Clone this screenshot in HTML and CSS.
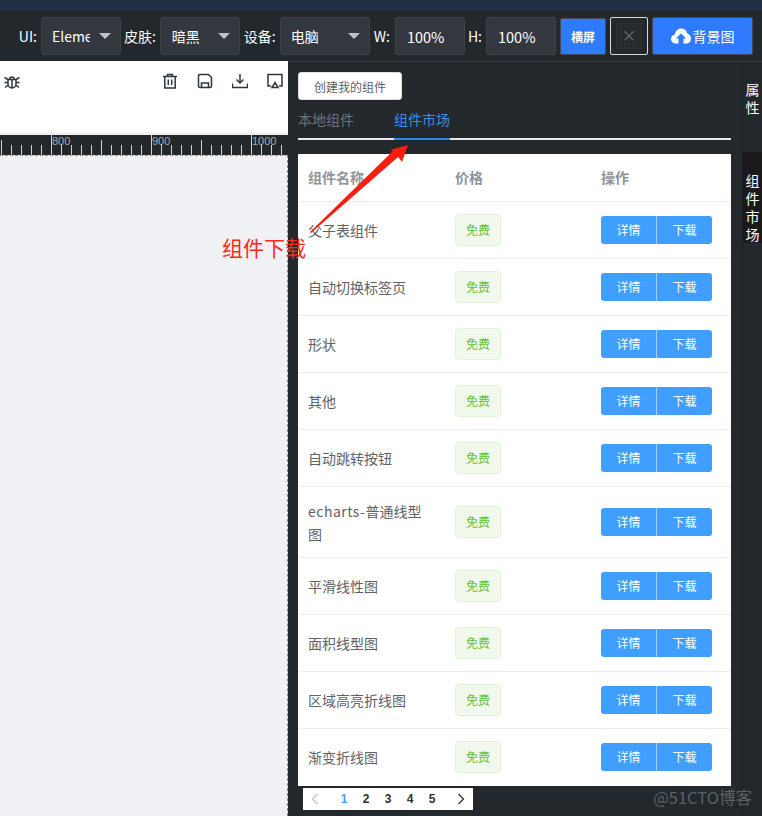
FILE: index.html
```html
<!DOCTYPE html>
<html lang="zh">
<head>
  <meta charset="UTF-8" />
  <meta name="viewport" content="width=device-width, initial-scale=1" />
  <title>组件市场</title>
  <link rel="stylesheet" href="styles.css">
</head>
<body>

  <div class="top-strip"></div>

  <header class="toolbar">
    <label class="field-label">UI:</label>
    <div class="select select-ui"><span class="select-text">Element</span><i class="caret"></i></div>
    <label class="field-label">皮肤:</label>
    <div class="select select-skin"><span class="select-text">暗黑</span><i class="caret"></i></div>
    <label class="field-label label-device">设备:</label>
    <div class="select select-device"><span class="select-text">电脑</span><i class="caret"></i></div>
    <label class="field-label label-w">W:</label>
    <div class="size-input">100%</div>
    <label class="field-label">H:</label>
    <div class="size-input">100%</div>
    <button class="btn-landscape">横屏</button>
    <button class="btn-rotate"><span>×</span></button>
    <button class="btn-bg">
      <svg width="20" height="16" viewBox="0 0 20 16"><path fill="#fff" d="M5 15.500C2.200 15.500 0 13.500 0 11c0-2.200 1.600-4 3.800-4.400C4.400 3 7 .5 10.200.5c3 0 5.500 2 6.100 4.900C18.500 6.100 20 8.200 20 10.700c0 2.700-2.200 4.800-4.900 4.800h-2.600v-5h2.700L10 5.400 4.800 10.500h2.700v5z"/></svg>
      背景图
    </button>
  </header>

  <main class="workspace">
    <section class="canvas-side">
      <div class="canvas-tools">
        <svg class="tool tool-bug" viewBox="0 0 16 16"><path d="M4 6.500h8v4.500a4 4 0 0 1-8 0zM5.500 6.500a2.500 2.500 0 0 1 5 0M8 7v7.500M.5 4.500l3.500 2M15.500 4.500l-3.500 2M.5 9.500H4M15.500 9.500H12M1 14.500l3.500-2.500M15 14.500 11.500 12"/></svg>
        <span class="tools-gap"></span>
        <svg class="tool" viewBox="0 0 16 16"><path d="M1 3.500h14M5.500 3.500V1.500h5v2M2.800 3.500v11.500h10.400V3.500M6.300 6.500v5.500M9.700 6.500v5.500"/></svg>
        <svg class="tool" viewBox="0 0 16 16"><path d="M2.500 1.500h9l3 3v8.500a1.500 1.500 0 0 1-1.500 1.500H3A1.500 1.500 0 0 1 1.500 13V2.500a1 1 0 0 1 1-1zM4.500 14.500V10h7v4.500"/></svg>
        <svg class="tool" viewBox="0 0 16 16"><path d="M8 1v8.500M4.500 6.500 8 10l3.500-3.500M.5 10.500v4h15v-4" /></svg>
        <svg class="tool" viewBox="0 0 16 16"><path d="M4 13H1V1.500h14V13h-3"/><path d="M8 9.500l3 5H5z"/></svg>
      </div>
      <div class="ruler">
        <span class="ruler-num num-800">800</span>
        <span class="ruler-num num-900">900</span>
        <span class="ruler-num num-1000">1000</span>
      </div>
      <div class="canvas-area"></div>
    </section>

    <section class="panel">
      <button class="btn-create">创建我的组件</button>
      <div class="tabs">
        <a class="tab">本地组件</a>
        <a class="tab active">组件市场</a>
      </div>
      <table class="market">
        <thead>
          <tr><th>组件名称</th><th>价格</th><th>操作</th></tr>
        </thead>
        <tbody>
          <tr><td>父子表组件</td><td><span class="tag">免费</span></td><td><div class="btn-group"><button>详情</button><button>下载</button></div></td></tr>
          <tr><td>自动切换标签页</td><td><span class="tag">免费</span></td><td><div class="btn-group"><button>详情</button><button>下载</button></div></td></tr>
          <tr><td>形状</td><td><span class="tag">免费</span></td><td><div class="btn-group"><button>详情</button><button>下载</button></div></td></tr>
          <tr><td>其他</td><td><span class="tag">免费</span></td><td><div class="btn-group"><button>详情</button><button>下载</button></div></td></tr>
          <tr><td>自动跳转按钮</td><td><span class="tag">免费</span></td><td><div class="btn-group"><button>详情</button><button>下载</button></div></td></tr>
          <tr><td><span class="latin">echarts-</span>普通线型图</td><td><span class="tag">免费</span></td><td><div class="btn-group"><button>详情</button><button>下载</button></div></td></tr>
          <tr><td>平滑线性图</td><td><span class="tag">免费</span></td><td><div class="btn-group"><button>详情</button><button>下载</button></div></td></tr>
          <tr><td>面积线型图</td><td><span class="tag">免费</span></td><td><div class="btn-group"><button>详情</button><button>下载</button></div></td></tr>
          <tr><td>区域高亮折线图</td><td><span class="tag">免费</span></td><td><div class="btn-group"><button>详情</button><button>下载</button></div></td></tr>
          <tr><td>渐变折线图</td><td><span class="tag">免费</span></td><td><div class="btn-group"><button>详情</button><button>下载</button></div></td></tr>
        </tbody>
      </table>
      <div class="pager">
        <svg class="pager-arrow" width="8" height="12" viewBox="0 0 8 12"><path d="M6.500 1 1.500 6l5 5" stroke="#c0c4cc"/></svg>
        <ul class="pager-nums">
          <li class="current">1</li><li>2</li><li>3</li><li>4</li><li>5</li>
        </ul>
        <svg class="pager-arrow" width="8" height="12" viewBox="0 0 8 12"><path d="M1.500 1l5 5-5 5" stroke="#303133"/></svg>
      </div>
    </section>

    <nav class="rail">
      <a class="rail-item rail-props">属性</a>
      <a class="rail-item rail-market">组件市场</a>
    </nav>
  </main>

  <!-- 截图上的标注 -->
  <svg class="note-arrow" width="110" height="100" viewBox="0 0 110 100"><path fill="#fb1e10" d="M2 90 85 9 82 8 100 3 94 20 90 15 3 91z"/></svg>
  <div class="note-text">组件下载</div>
  <div class="watermark">@51CTO博客</div>

</body>
</html>
```

FILE: styles.css
```css
* {
  box-sizing: border-box;
}
body {
  margin: 0;
  height: 816px;
  overflow: hidden;
  position: relative;
  display: flex;
  flex-direction: column;
  font-family: "Noto Sans CJK SC", "Liberation Sans", sans-serif;
  font-size: 14px;
  background: #23282d;
}
button {
  font-family: inherit;
  cursor: pointer;
}

.top-strip {
  height: 11px;
  background: #232f45;
}

/* 顶部工具栏 */
.toolbar {
  height: 50px;
  flex: none;
  background: #23282d;
  display: flex;
  align-items: center;
  justify-content: flex-end;
  padding: 0 9px 0 0;
  color: #fff;
}
.field-label {
  font-size: 14px;
  white-space: nowrap;
  margin-right: 4px;
  margin-left: 3px;
}
.label-device {
  margin-left: 4px;
}
.label-w {
  margin-left: 4px;
  margin-right: 5px;
}
.select {
  height: 38px;
  background: #33383f;
  border: 1px solid #3e434a;
  border-radius: 3px;
  display: flex;
  align-items: center;
  justify-content: space-between;
  padding: 0 9px 0 10px;
  font-size: 14px;
}
.select-ui { width: 80px; }
.select-skin { width: 80px; padding-left: 11px; }
.select-device { width: 90px; }
.select-text {
  overflow: hidden;
  white-space: nowrap;
  width: 38px;
}
.caret {
  width: 0;
  height: 0;
  border-left: 6px solid transparent;
  border-right: 6px solid transparent;
  border-top: 6px solid #bfc2c6;
}
.size-input {
  width: 70px;
  height: 38px;
  background: #33383f;
  border: 1px solid #3e434a;
  border-radius: 3px;
  display: flex;
  align-items: center;
  padding-left: 11px;
  font-size: 14.500px;
}
.btn-landscape {
  width: 46px;
  height: 37px;
  margin-left: 4px;
  background: #2f7bff;
  border: 1px solid #3f4a5a;
  border-radius: 2px;
  color: #fff;
  font-size: 12px;
  font-weight: 700;
  padding: 0;
}
.btn-rotate {
  width: 38px;
  height: 38px;
  margin-left: 4px;
  padding: 0;
  background: #23282d;
  border: 1px solid #d8d8d8;
  border-radius: 2px;
  display: flex;
  align-items: center;
  justify-content: center;
}
.btn-rotate span {
  width: 26px;
  height: 26px;
  background: #272b30;
  border: 1px solid #2c3035;
  color: #70757b;
  font-size: 15px;
  line-height: 22px;
}
.btn-bg {
  width: 101px;
  height: 38px;
  margin-left: 4px;
  background: #2f7bff;
  border: 1px solid #3f4a5a;
  border-radius: 2px;
  color: #fff;
  font-size: 14px;
  display: flex;
  align-items: center;
  justify-content: center;
  gap: 2px;
  padding: 0;
}

.workspace {
  flex: 1;
  display: flex;
  min-height: 0;
}

/* 左边画布 */
.canvas-side {
  width: 288px;
  flex: none;
  display: flex;
  flex-direction: column;
  background: #f0f1f5;
}
.canvas-tools {
  height: 71px;
  flex: none;
  background: #fff;
  display: flex;
  align-items: flex-start;
  padding: 12px 5px 0 4px;
  gap: 19px;
}
.tools-gap {
  flex: 1;
}
.tool {
  width: 16px;
  height: 16px;
  flex: none;
  fill: none;
  stroke: #2d3640;
  stroke-width: 1.500;
}
.ruler {
  height: 20px;
  flex: none;
  margin-top: 3px;
  position: relative;
  background-color: #23282d;
  background-image:
    linear-gradient(90deg, #d0d2d4 1px, transparent 1px),
    linear-gradient(90deg, #d0d2d4 1px, transparent 1px),
    linear-gradient(90deg, #d0d2d4 1px, transparent 1px);
  background-size: 100px 20px, 100px 15px, 10px 10px;
  background-position: 51px 0, 1px 5px, 1px 10px;
  background-repeat: repeat-x;
}
.ruler-num {
  position: absolute;
  top: 0;
  font-size: 11px;
  line-height: 13px;
  color: #a9abad;
  font-family: "Liberation Sans", sans-serif;
}
.num-800 { left: 52px; }
.num-900 { left: 152px; }
.num-1000 { left: 252px; }
.canvas-area {
  flex: 1;
  border-top: 1px dashed #a99a9a;
  border-right: 1px dashed #8f8588;
}

/* 右边面板 */
.panel {
  width: 454px;
  flex: none;
  background: #23282d;
  border-top: 1px solid #3a3e43;
  padding: 10px 11px 0 10px;
  display: flex;
  flex-direction: column;
  align-items: flex-start;
}
.btn-create {
  width: 104px;
  height: 28px;
  background: #fff;
  border: 1px solid #dcdfe6;
  border-radius: 3px;
  color: #606266;
  font-size: 12px;
  padding: 0;
}
.tabs {
  width: 100%;
  height: 40px;
  display: flex;
  align-items: flex-end;
  border-bottom: 2px solid #e4e7ed;
  gap: 40px;
}
.tab {
  height: 40px;
  line-height: 38px;
  margin-bottom: -2px;
  color: #6f747a;
  font-size: 14px;
  border-bottom: 2px solid transparent;
}
.tab.active {
  color: #3a8ee6;
  border-bottom-color: #2f86e6;
}

.market {
  width: 433px;
  margin-top: 14px;
  background: #fff;
  border-collapse: collapse;
  table-layout: fixed;
  color: #606266;
  font-size: 14px;
}
.market th {
  height: 47px;
  padding: 0 10px;
  text-align: left;
  color: #909399;
  font-weight: 700;
  font-size: 14px;
  border-bottom: 1px solid #ebeef5;
  width: 146px;
}
.market th:first-child {
  width: 147px;
}
.market th:last-child {
  width: 140px;
}
.market td {
  height: 57px;
  padding: 12px 10px;
  line-height: 23px;
  border-bottom: 1px solid #ebeef5;
}
.market td:first-child {
  padding: 13px 10px 11px;
}
.market tr:last-child td {
  border-bottom-color: #fff;
}
.latin {
  letter-spacing: 0.500px;
}
.tag {
  display: flex;
  align-items: center;
  justify-content: center;
  width: 46px;
  height: 32px;
  background: #f0f9eb;
  border: 1px solid #e1f3d8;
  border-radius: 4px;
  color: #67c23a;
  font-size: 12px;
}
.btn-group {
  display: flex;
  width: 111px;
}
.btn-group button {
  width: 55px;
  height: 28px;
  padding: 0;
  background: #409eff;
  border: none;
  color: #fff;
  font-size: 12px;
  border-radius: 3px 0 0 3px;
}
.btn-group button + button {
  width: 56px;
  border-left: 1px solid #a0cfff;
  border-radius: 0 3px 3px 0;
}

.pager {
  width: 170px;
  height: 22px;
  margin: 2px 0 0 5px;
  background: #fff;
  display: flex;
  align-items: center;
  justify-content: space-between;
  padding: 0 8px;
}
.pager-arrow {
  fill: none;
  stroke-width: 1.300;
}
.pager-nums {
  list-style: none;
  margin: 0;
  padding: 0;
  display: flex;
  font-family: "Liberation Sans", sans-serif;
  font-size: 12px;
  font-weight: 700;
  color: #303133;
}
.pager-nums li {
  width: 22px;
  text-align: center;
}
.pager-nums .current {
  color: #409eff;
}

/* 右侧竖条 */
.rail {
  width: 20px;
  flex: none;
  background: #23282d;
  border-left: 1px solid #1c2024;
  border-top: 1px solid #3a3e43;
  display: flex;
  flex-direction: column;
}
.rail-item {
  color: #fff;
  font-size: 14px;
  line-height: 18px;
  white-space: nowrap;
  writing-mode: vertical-lr;
  display: flex;
  align-items: center;
  letter-spacing: 4px;
}
.rail-props {
  height: 90px;
  padding-top: 21px;
}
.rail-market {
  height: 91px;
  padding-top: 22px;
  background: #1a1a1c;
}

/* 标注 */
.note-arrow {
  position: absolute;
  left: 308px;
  top: 142px;
}
.note-text {
  position: absolute;
  left: 222px;
  top: 232px;
  color: #fa2a1a;
  font-size: 21px;
  line-height: 30px;
}
.watermark {
  position: absolute;
  right: 10px;
  top: 786px;
  color: #5c6166;
  font-size: 16.500px;
  line-height: 22px;
}
```
